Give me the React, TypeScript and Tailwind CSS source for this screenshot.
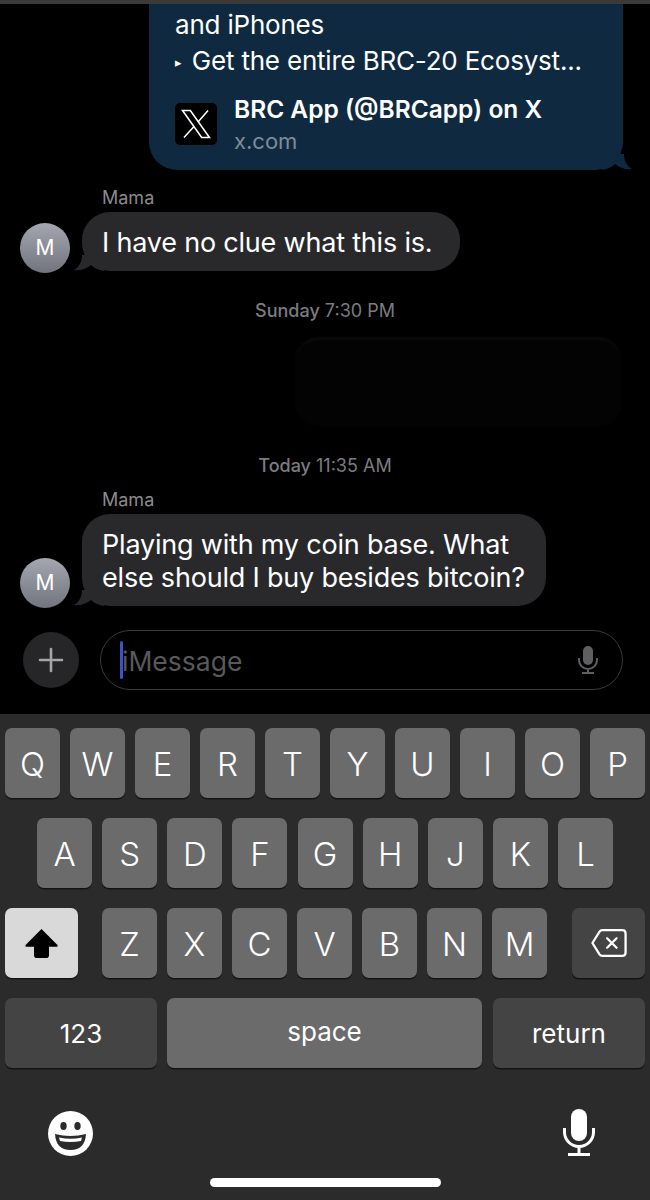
const font = "[font-family:Inter,'Liberation_Sans',sans-serif]";

function Avatar() {
  return (
    <div className="flex h-[50px] w-[50px] shrink-0 items-center justify-center rounded-full bg-gradient-to-b from-[#a5a7b0] to-[#73757e] text-[21px] text-white">
      M
    </div>
  );
}

function IncomingTail() {
  return (
    <svg className="absolute bottom-0 left-[-8px]" width="30" height="16" viewBox="0 0 30 16">
      <path d="M8 0 C8 7 5 12 0 15 C6 16 12 14 17 10 C20 13 24 15 30 16 L30 0 Z" fill="#29292c" />
    </svg>
  );
}

function Incoming({ lines, width }: { lines: string[]; width: string }) {
  return (
    <div className="flex items-end pl-5">
      <div className="mb-[-1.5px]">
        <Avatar />
      </div>
      <div className={`relative ml-3 rounded-[28px] bg-[#29292c] px-5 pb-[12px] pt-[14px] text-[27px] leading-[33px] tracking-[-0.2px] text-white ${width}`}>
        <IncomingTail />
        <div className="relative">
          {lines.map((l) => (
            <div key={l} className="whitespace-nowrap">{l}</div>
          ))}
        </div>
      </div>
    </div>
  );
}

function Key({ label, className = "", children }: { label?: string; className?: string; children?: React.ReactNode }) {
  return (
    <div className={`flex h-[70px] items-center justify-center rounded-[7px] text-white shadow-[0_1.5px_0_#141414] ${className}`}>
      {label}
      {children}
    </div>
  );
}

function Row({ keys }: { keys: string }) {
  return (
    <>
      {keys.split("").map((k) => (
        <Key key={k} label={k} className="w-[55px] bg-[#6b6b6b] pt-[3px] text-[33px] font-light" />
      ))}
    </>
  );
}

export default function App() {
  return (
    <div className={`flex h-[1200px] w-[650px] flex-col overflow-hidden bg-black ${font}`}>
      <div className="h-[4px] bg-[#3a3a3a]" />

      {/* Link preview bubble */}
      <div className="relative ml-[149px] h-[166px] w-[474px] rounded-b-[28px] bg-[#0f2a40] pl-[26px] pt-[3px] text-[26px] leading-[36px] tracking-[-0.2px] text-white">
        <div>and iPhones</div>
        <div className="whitespace-nowrap"><span className="mr-[10px] align-[3px] text-[13px]">▸</span>Get the entire BRC-20 Ecosyst...</div>
        <div className="mt-[13px] flex gap-[17px]">
          <div className="mt-[10px] flex h-[42px] w-[42px] items-center justify-center rounded-[5px] bg-black">
            <svg width="34" height="34" viewBox="0 0 24 24" fill="none" stroke="white" strokeWidth="1.1">
              <path d="M2.5 2.5 H8 L21.5 21.5 H16 Z" />
              <path d="M20.5 2.5 L13.6 10.4 M10.6 13.8 L3.5 21.5" />
            </svg>
          </div>
          <div>
            <div className="whitespace-nowrap text-[24.5px] font-semibold leading-[32px] tracking-normal">BRC App (@BRCapp) on X</div>
            <div className="pt-[1px] text-[22px] leading-[30px] tracking-normal text-[#7f8b9a]">x.com</div>
          </div>
        </div>
        <svg className="absolute bottom-0 right-[-9px]" width="30" height="16" viewBox="0 0 30 16">
          <path d="M22 0 C22 7 25 12 30 15 C24 16 18 14 13 10 C10 13 6 15 0 16 L0 0 Z" fill="#0f2a40" />
        </svg>
      </div>

      <div className="ml-[102px] mt-4 text-[18px] leading-[24px] text-[#8a8a8e]">Mama</div>
      <div className="mt-[2px]">
        <Incoming lines={["I have no clue what this is."]} width="h-[59px] w-[378px]" />
      </div>

      <div className="mt-[28px] text-center text-[18px] leading-[24px] text-[#7c7c80]">
        <span className="font-medium">Sunday</span> 7:30 PM
      </div>

      {/* Blurred out bubble */}
      <div className="ml-[295px] mt-[15px] h-[89px] w-[327px] rounded-[24px] border-t border-[#1d1d1d] bg-[#030303] blur-[1px]" />

      <div className="mt-[27px] text-center text-[18px] leading-[24px] text-[#7c7c80]">
        <span className="font-medium">Today</span> 11:35 AM
      </div>

      <div className="ml-[102px] mt-[10px] text-[18px] leading-[24px] text-[#8a8a8e]">Mama</div>
      <div className="mt-[2px]">
        <Incoming lines={["Playing with my coin base. What", "else should I buy besides bitcoin?"]} width="h-[92px] w-[464px]" />
      </div>

      {/* Composer */}
      <div className="ml-[23px] mt-[24px] flex items-center gap-[21px]">
        <div className="flex h-[56px] w-[56px] items-center justify-center rounded-full bg-[#262628]">
          <svg width="26" height="26" viewBox="0 0 26 26" stroke="#a5a5a8" strokeWidth="2.6" strokeLinecap="round">
            <path d="M13 2v22M2 13h22" />
          </svg>
        </div>
        <div className="flex h-[60px] w-[523px] items-center justify-between rounded-full border border-[#3a3a3c] pl-[19px] pr-[24px]">
          <div className="flex items-center text-[26.5px] text-[#59595c]">
            <div className="mr-[-1px] h-[38px] w-[3px] rounded-full bg-[#3f51c4]" />
            <span className="pt-[3px]">iMessage</span>
          </div>
          <svg width="20" height="28" viewBox="0 0 20 28" fill="none" stroke="#5f5f62" strokeWidth="2">
            <rect x="5" y="0" width="10" height="19" rx="5" fill="#5f5f62" stroke="none" />
            <path d="M1 12v2a9 9 0 0 0 18 0v-2M10 23v4M4 27h12" />
          </svg>
        </div>
      </div>

      {/* Keyboard */}
      <div className="mt-[24px] flex flex-1 flex-col bg-[#2b2b2b] pt-[14px]">
        <div className="flex justify-between px-[5px]"><Row keys="QWERTYUIOP" /></div>
        <div className="mt-5 flex justify-between px-[37px]"><Row keys="ASDFGHJKL" /></div>
        <div className="mt-5 flex px-[5px]">
          <Key className="w-[73px] bg-[#d9d9d9]">
            <svg width="35" height="30" viewBox="0 0 36 32" fill="#000">
              <path d="M18 1 L35 18 Q36 20 33 20 H26 V29 Q26 32 23 32 H13 Q10 32 10 29 V20 H3 Q0 20 1 18 Z" />
            </svg>
          </Key>
          <div className="ml-[24px] flex gap-[10px]"><Row keys="ZXCVBNM" /></div>
          <Key className="ml-[25px] w-[73px] bg-[#444444]">
            <svg width="36" height="30" viewBox="0 0 38 30" fill="none" stroke="white" strokeWidth="2.4" strokeLinejoin="round" strokeLinecap="round">
              <path d="M12 1.5 H33 Q36.5 1.5 36.5 5 V25 Q36.5 28.5 33 28.5 H12 Q10 28.5 9 27 L1.5 15 L9 3 Q10 1.5 12 1.5 Z" />
              <path d="M17 10 L27 20 M27 10 L17 20" />
            </svg>
          </Key>
        </div>
        <div className="mt-5 flex px-[5px]">
          <Key label="123" className="w-[152px] bg-[#444444] text-[26px]" />
          <Key className="ml-[10px] w-[315px] bg-[#6b6b6b] pb-[4px] text-[26px]" label="space" />
          <Key label="return" className="ml-[11px] w-[152px] bg-[#444444] text-[26px]" />
        </div>

        <div className="mt-[33px] flex items-start justify-between pl-[48px] pr-[55px]">
          <svg className="mt-[10px]" width="45" height="45" viewBox="0 0 45 45">
            <circle cx="22.5" cy="22.5" r="22.5" fill="white" />
            <ellipse cx="15.5" cy="15" rx="3.2" ry="4" fill="#2b2b2b" />
            <ellipse cx="29.5" cy="15" rx="3.2" ry="4" fill="#2b2b2b" />
            <path d="M7 23 Q22.5 27 38 23 Q37 39 22.5 39 Q8 39 7 23 Z" fill="#2b2b2b" />
            <path d="M11 26.5 Q22.5 29 34 26.5 L33 30 Q22.5 32 12 30 Z" fill="white" />
          </svg>
          <svg className="mt-[8px]" width="32" height="47" viewBox="0 0 32 47" fill="none" stroke="white" strokeWidth="3">
            <rect x="8" y="0" width="16" height="32" rx="8" fill="white" stroke="none" />
            <path d="M1.5 19v4a14.5 14.5 0 0 0 29 0v-4M16 38v7M5 45.5h22" />
          </svg>
        </div>
        <div className="mx-auto mt-[22px] h-[9px] w-[231px] rounded-full bg-white" />
      </div>
    </div>
  );
}
